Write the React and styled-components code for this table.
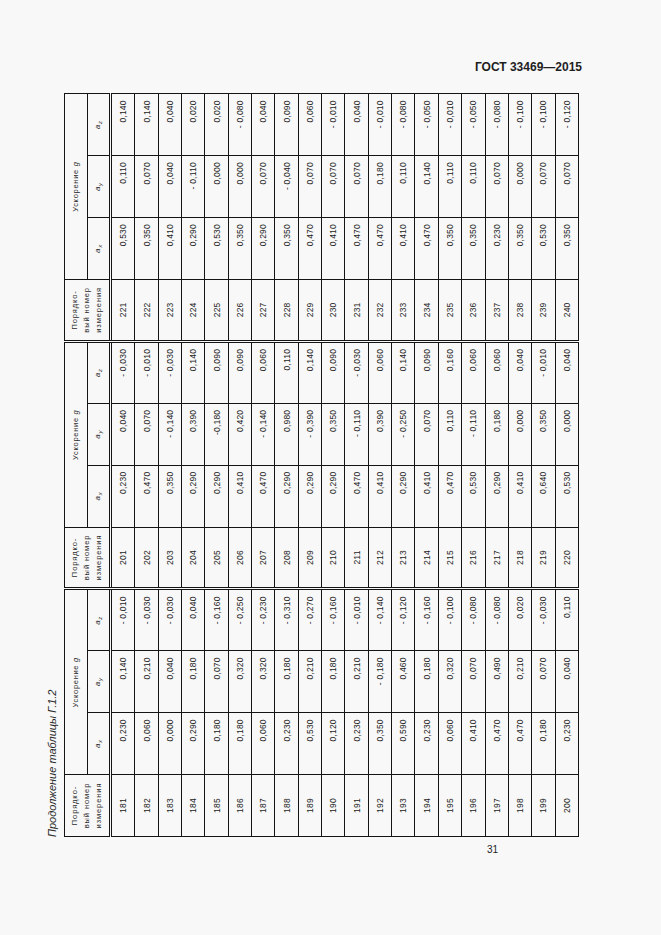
import React from "react";
import styled, { createGlobalStyle } from "styled-components";

const GlobalStyle = createGlobalStyle`
  html, body {
    margin: 0;
    padding: 0;
    background: #f8f8f8;
  }
`;

// каждая группа: 20 строк, [a_x, a_y, a_z]
const groups = [
  {
    start: 181,
    values: [
      ["0,230", "0,140", "- 0,010"],
      ["0,060", "0,210", "- 0,030"],
      ["0,000", "0,040", "- 0,030"],
      ["0,290", "0,180", "0,040"],
      ["0,180", "0,070", "- 0,160"],
      ["0,180", "0,320", "- 0,250"],
      ["0,060", "0,320", "- 0,230"],
      ["0,230", "0,180", "- 0,310"],
      ["0,530", "0,210", "- 0,270"],
      ["0,120", "0,180", "- 0,160"],
      ["0,230", "0,210", "- 0,010"],
      ["0,350", "- 0,180", "- 0,140"],
      ["0,590", "0,460", "- 0,120"],
      ["0,230", "0,180", "- 0,160"],
      ["0,060", "0,320", "- 0,100"],
      ["0,410", "0,070", "- 0,080"],
      ["0,470", "0,490", "- 0,080"],
      ["0,470", "0,210", "0,020"],
      ["0,180", "0,070", "- 0,030"],
      ["0,230", "0,040", "0,110"],
    ],
  },
  {
    start: 201,
    values: [
      ["0,230", "0,040", "- 0,030"],
      ["0,470", "0,070", "- 0,010"],
      ["0,350", "- 0,140", "- 0,030"],
      ["0,290", "0,390", "0,140"],
      ["0,290", "-0,180", "0,090"],
      ["0,410", "0,420", "0,090"],
      ["0,470", "- 0,140", "0,060"],
      ["0,290", "0,980", "0,110"],
      ["0,290", "- 0,390", "0,140"],
      ["0,290", "0,350", "0,090"],
      ["0,470", "- 0,110", "- 0,030"],
      ["0,410", "0,390", "0,060"],
      ["0,290", "- 0,250", "0,140"],
      ["0,410", "0,070", "0,090"],
      ["0,470", "0,110", "0,160"],
      ["0,530", "- 0,110", "0,060"],
      ["0,290", "0,180", "0,060"],
      ["0,410", "0,000", "0,040"],
      ["0,640", "0,350", "- 0,010"],
      ["0,530", "0,000", "0,040"],
    ],
  },
  {
    start: 221,
    values: [
      ["0,530", "0,110", "0,140"],
      ["0,350", "0,070", "0,140"],
      ["0,410", "0,040", "0,040"],
      ["0,290", "- 0,110", "0,020"],
      ["0,530", "0,000", "0,020"],
      ["0,350", "0,000", "- 0,080"],
      ["0,290", "0,070", "0,040"],
      ["0,350", "- 0,040", "0,090"],
      ["0,470", "0,070", "0,060"],
      ["0,410", "0,070", "- 0,010"],
      ["0,470", "0,070", "0,040"],
      ["0,470", "0,180", "- 0,010"],
      ["0,410", "0,110", "- 0,080"],
      ["0,470", "0,140", "- 0,050"],
      ["0,350", "0,110", "- 0,010"],
      ["0,350", "0,110", "- 0,050"],
      ["0,230", "0,070", "- 0,080"],
      ["0,350", "0,000", "- 0,100"],
      ["0,530", "0,070", "- 0,100"],
      ["0,350", "0,070", "- 0,120"],
    ],
  },
];

const axes = ["x", "y", "z"];

export default function App() {
  return (
    <>
      <GlobalStyle />
      <Page>
        <RunningHead>ГОСТ 33469—2015</RunningHead>

        {/* Таблица на странице повёрнута на 90° */}
        <Sheet>
          <Turned>
            <Caption>Продолжение таблицы Г.1.2</Caption>
            <Grid>
              <colgroup>
                {Array.from({ length: 12 }).map((_, i) => (
                  <col key={i} />
                ))}
              </colgroup>
              <thead>
                <tr>
                  {groups.map((g, gi) => (
                    <React.Fragment key={gi}>
                      <HeadCell rowSpan={2} $groupStart={gi > 0} $tall>
                        Порядко-
                        <br />
                        вый номер
                        <br />
                        измерения
                      </HeadCell>
                      <HeadCell colSpan={3} $top>
                        Ускорение <i>g</i>
                      </HeadCell>
                    </React.Fragment>
                  ))}
                </tr>
                <tr>
                  {groups.map((g, gi) =>
                    axes.map((ax) => (
                      <HeadCell key={gi + ax} $sub>
                        <Axis>
                          a<sub>{ax}</sub>
                        </Axis>
                      </HeadCell>
                    ))
                  )}
                </tr>
              </thead>
              <tbody>
                {groups[0].values.map((_, ri) => (
                  <tr key={ri}>
                    {groups.map((g, gi) => (
                      <React.Fragment key={gi}>
                        <Cell $center $groupStart={gi > 0}>
                          {g.start + ri}
                        </Cell>
                        {g.values[ri].map((v, vi) => (
                          <Cell key={vi}>{v}</Cell>
                        ))}
                      </React.Fragment>
                    ))}
                  </tr>
                ))}
              </tbody>
            </Grid>
          </Turned>
        </Sheet>

        <PageNumber>31</PageNumber>
      </Page>
    </>
  );
}

const Page = styled.div`
  width: 661px;
  min-height: 935px;
  box-sizing: border-box;
  padding-top: 60px;
  background: #f8f8f8;
  color: #1e1e1e;
  font-family: "Liberation Sans", Arial, sans-serif;
`;

const RunningHead = styled.div`
  height: 14px;
  line-height: 14px;
  font-size: 12px;
  font-weight: bold;
  text-align: right;
  padding-right: 79px;
`;

const Sheet = styled.div`
  width: 536px;
  height: 743px;
  margin-top: 20px;
  margin-left: 44px;
`;

const Turned = styled.div`
  width: 743px;
  height: 536px;
  transform-origin: 0 0;
  transform: translateY(743px) rotate(-90deg);
`;

const Caption = styled.div`
  height: 16px;
  line-height: 16px;
  margin-bottom: 4px;
  font-size: 11px;
  font-style: italic;
  color: #2a2a2a;
`;

const Grid = styled.table`
  width: 743px;
  table-layout: fixed;
  border-collapse: collapse;
  border: 1px solid #141414;
  col {
    width: 61.9px;
  }
  tbody tr:first-child td {
    border-top: 3px double #141414;
  }
`;

const HeadCell = styled.th`
  border: 1px solid #141414;
  border-left: ${(p) => (p.$groupStart ? "3px double #141414" : "1px solid #141414")};
  padding: 0 2px;
  font-weight: normal;
  font-size: 7.5px;
  letter-spacing: ${(p) => (p.$tall ? "0.9px" : "0.7px")};
  line-height: 12px;
  text-align: center;
  vertical-align: middle;
  height: ${(p) => (p.$top ? "22px" : "21px")};
  color: #2a2a2a;
  i {
    font-style: italic;
  }
`;

const Axis = styled.span`
  font-style: italic;
  font-size: 8px;
  sub {
    font-size: 6px;
    vertical-align: -2px;
  }
`;

const Cell = styled.td`
  border: 1px solid #141414;
  border-left: ${(p) => (p.$groupStart ? "3px double #141414" : "1px solid #141414")};
  height: 22.35px;
  padding: 0 ${(p) => (p.$center ? "0" : "6px")} 0 0;
  font-size: 8.5px;
  letter-spacing: 0.2px;
  text-align: ${(p) => (p.$center ? "center" : "right")};
  vertical-align: middle;
  white-space: nowrap;
  color: #222;
`;

const PageNumber = styled.div`
  margin-top: 7px;
  padding-left: 487px;
  font-size: 10px;
  line-height: 12px;
`;
